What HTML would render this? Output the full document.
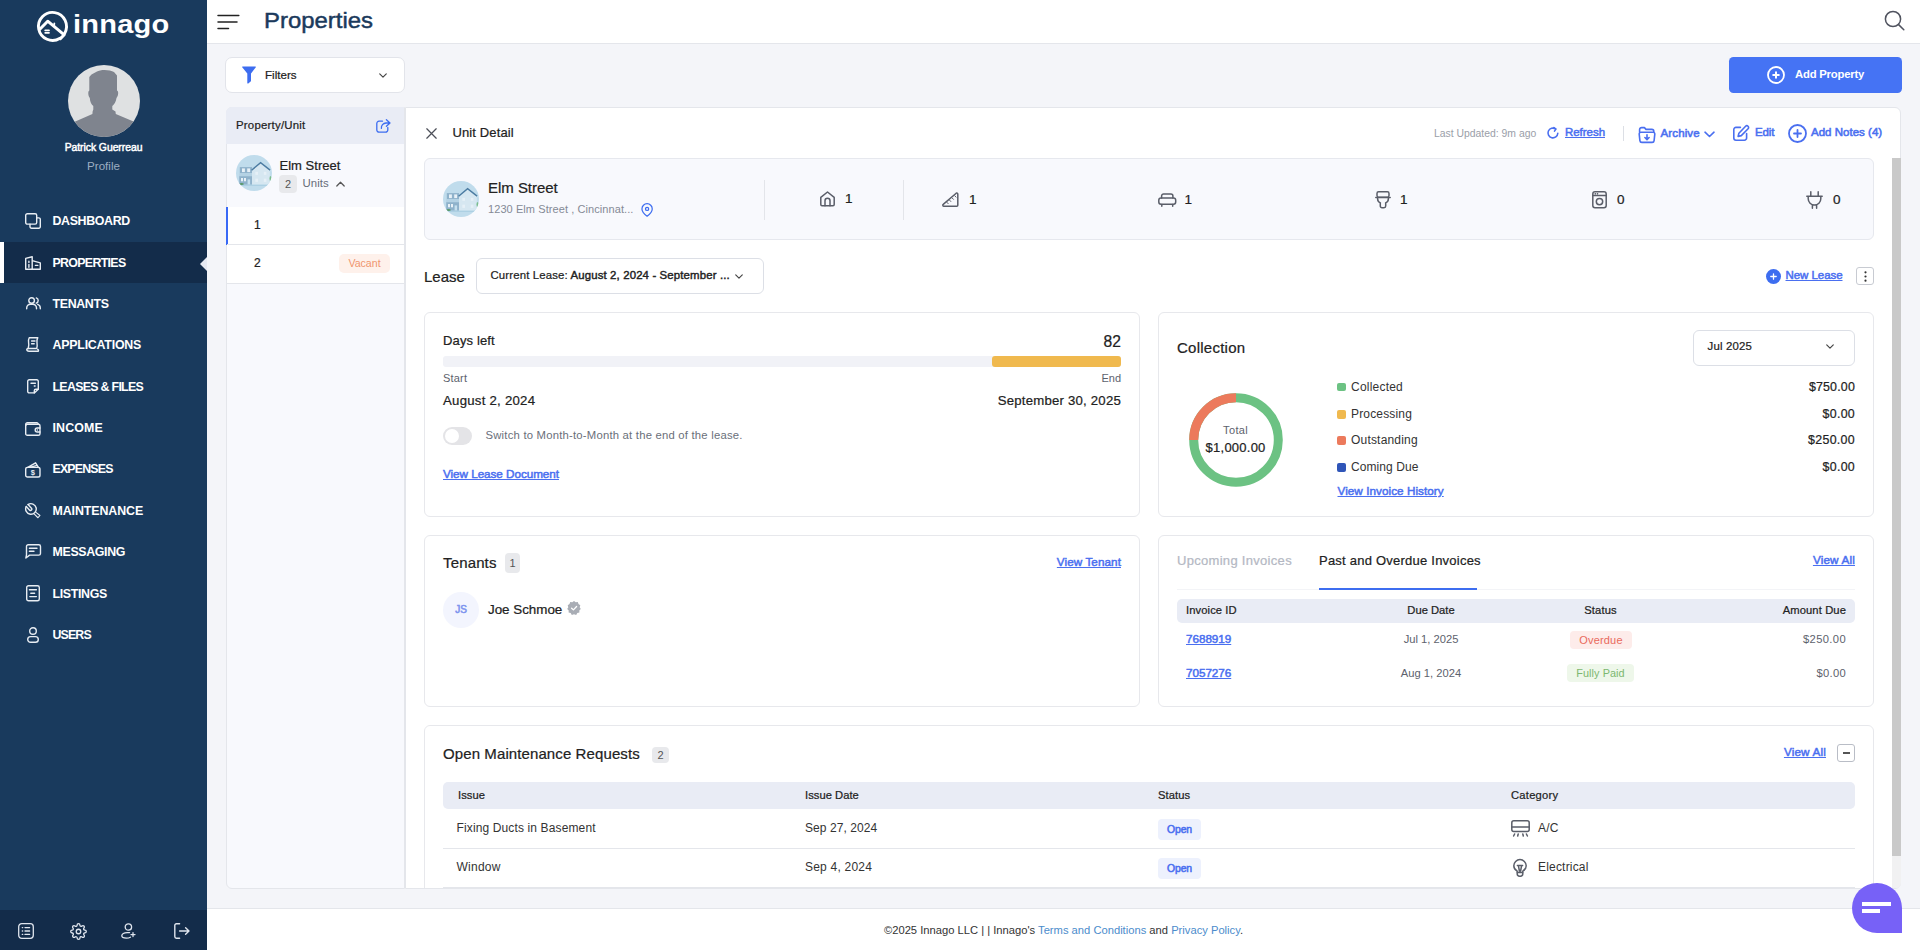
<!DOCTYPE html>
<html lang="en">
<head>
<meta charset="utf-8">
<title>Properties</title>
<style>
*{box-sizing:border-box;margin:0;padding:0}
html,body{width:1920px;height:950px;overflow:hidden;background:#f4f5f9;font-family:"Liberation Sans",sans-serif;color:#222}
.abs{position:absolute}
.t{position:absolute;white-space:nowrap;line-height:20px;height:20px}
.b{font-weight:bold}
.m{-webkit-text-stroke:0.22px}
.sb{-webkit-text-stroke:0.55px}
.lnk{color:#4a6ff0;text-decoration:underline;-webkit-text-stroke:0.5px;text-underline-offset:1px}
svg{position:absolute;overflow:visible}
/* sidebar */
#sb{position:absolute;left:0;top:0;width:207px;height:950px;background:#193a5d}
#sbb{position:absolute;left:0;top:910px;width:207px;height:40px;background:#132c4a}
.nav{position:absolute;left:0;width:207px;height:41px}
.nav span{position:absolute;left:52.5px;top:10.7px;line-height:20px;font-size:12.4px;font-weight:bold;color:#fff;letter-spacing:-0.35px;white-space:nowrap}
.nav.act{background:#132c4a}
.nav.act:before{content:"";position:absolute;left:0;top:0;width:4px;height:41px;background:#fff}
.nav.act:after{content:"";position:absolute;right:0;top:14.5px;border-style:solid;border-width:7.5px 7px 7.5px 0;border-color:transparent #e6e9f2 transparent transparent}
.nav svg{left:24px;top:11px;width:19px;height:19px;fill:none;stroke:#e8edf3;stroke-width:1.4;stroke-linecap:round;stroke-linejoin:round}
/* header */
#hd{position:absolute;left:207px;top:0;width:1713px;height:44px;background:#fff;border-bottom:1px solid #e4e6eb}
#ft{position:absolute;left:207px;top:908px;width:1713px;height:42px;background:#fff;border-top:1px solid #e4e6eb}
.card{position:absolute;background:#fff;border:1px solid #e7e8ec;border-radius:6px}
.th{position:absolute;background:#e9ecf5;border-radius:5px}
.si{fill:none;stroke:#5a5e69;stroke-width:1.5;stroke-linecap:round;stroke-linejoin:round}
.badge{position:absolute;border-radius:4px;text-align:center;white-space:nowrap}
</style>
</head>
<body>
<!-- SIDEBAR -->
<div id="sb">
  <svg id="lg" style="left:35px;top:9px;width:34px;height:34px" viewBox="0 0 34 34" fill="none" stroke="#fff" stroke-linecap="round" stroke-linejoin="round">
    <path d="M29.6 24.4 A14 14 0 1 0 25 29.2" stroke-width="2.9"/>
    <path d="M5.3 19.8 L12.7 12.2 L29.2 25.8 L25.4 29.6" stroke-width="3"/>
    <path d="M19.3 14.2 v2.6" stroke-width="1.6"/>
    <path d="M10.2 21.3 h3.8 M10.2 23.8 h3.8" stroke-width="1.8"/>
  </svg>
  <div id="xL" class="t" style="left:73px;top:3.5px;height:40px;line-height:40px;font-size:26.4px;font-weight:bold;color:#fff;letter-spacing:0.2px;transform:scaleX(1.1);transform-origin:0 50%">innago</div>
  <div class="abs" style="left:68px;top:65px;width:72px;height:72px;border-radius:50%;background:#dfe1e2;overflow:hidden">
    <svg style="left:0;top:0;width:72px;height:72px" viewBox="0 0 72 72"><path fill="#7f848e" d="M29 6.500C32 4.300 42 4.300 46 7L49 10.500V25.500C50.800 26 50.500 31 48.500 33 48 37 46 39.500 44.300 41V44.500L47.500 46.500 47.800 49 65.500 56.500 72 60V72H0V60L7.300 56.500 24.400 49 24.600 46.500 25.300 44.500V41C23.500 39.500 22 37 21.800 33 20 31 19.800 26 21.300 25.500V12L23.500 9.500z"/></svg>
  </div>
  <div id="x2" class="t" style="left:0;width:207px;text-align:center;top:138.2px;font-size:10.4px;-webkit-text-stroke:0.45px;color:#fff;letter-spacing:-0.05px">Patrick Guerreau</div>
  <div id="x3" class="t" style="left:0;width:207px;text-align:center;top:156.4px;font-size:11.6px;color:#9dadc1">Profile</div>

  <div class="nav" style="top:200px"><svg style="left:25px;top:13px;width:16px;height:16px" viewBox="0 0 16 16"><rect x=".7" y=".7" width="11" height="10.4" rx="1.6"/><path d="M5 11.1v2.7a1.5 1.5 0 0 0 1.5 1.5h7.3a1.5 1.5 0 0 0 1.5-1.5V6.4a1.5 1.5 0 0 0-1.5-1.5h-2.1"/></svg><span>DASHBOARD</span></div>
  <div class="nav act" style="top:242px"><svg style="left:24.6px;top:14px;width:16px;height:14px" viewBox="0 0 16 14"><path d="M.7 13.3V2.4L7.2.7v12.6M7.2 4.6l8.1 2.3v6.4H.7"/><path d="M3.9 5.2v1.2M3.9 8.4v2.8M10.4 9.4h2.4"/></svg><span style="letter-spacing:-0.69px">PROPERTIES</span></div>
  <div class="nav" style="top:283px"><svg style="left:26px;top:14.3px;width:15px;height:12.5px" viewBox="0 0 15 12.5"><circle cx="5.6" cy="3.5" r="2.8"/><path d="M.7 11.8v-.8a3.8 3.8 0 0 1 3.8-3.8h2.2a3.8 3.8 0 0 1 3.8 3.8v.8"/><path d="M10.3.9a2.8 2.8 0 0 1 0 5.3M14.3 11.8v-.8a3.8 3.8 0 0 0-2.6-3.6"/></svg><span>TENANTS</span></div>
  <div class="nav" style="top:324px"><svg style="left:26px;top:13.2px;width:13.5px;height:15px" viewBox="0 0 13.5 15"><path d="M3.2.7h8.6q-1.3 2.4-.8 5.2t-.3 5.6H2.2q1-3.2.4-5.8T3.2.7z"/><path d="M2.2 11.5q-1.7.3-1.4 1.5t2.2 1.3h9.2q.8-1.2-.5-2"/><path d="M5.6 4h3.4M5.6 6.8h2.6"/></svg><span style="letter-spacing:-0.23px">APPLICATIONS</span></div>
  <div class="nav" style="top:366px"><svg style="left:27px;top:13.4px;width:12px;height:14.6px" viewBox="0 0 12 14.6"><path d="M.7 2.2A1.5 1.5 0 0 1 2.2.7h7.6a1.5 1.5 0 0 1 1.5 1.5v8l-4 3.7H2.2a1.5 1.5 0 0 1-1.5-1.5z"/><path d="M11.3 10.2H8.8a1.5 1.5 0 0 0-1.5 1.5v2.2M4 4.3h4.4M7.3 7h.8"/></svg><span style="letter-spacing:-0.71px">LEASES &amp; FILES</span></div>
  <div class="nav" style="top:407px"><svg style="left:25.3px;top:14.5px;width:15.7px;height:14px" viewBox="0 0 15.7 14"><rect x=".7" y="2.2" width="14.3" height="11.1" rx="1.6"/><path d="M.7 3.6V2.4A1.7 1.7 0 0 1 2.4.7h9.4a1.5 1.5 0 0 1 1.5 1.5"/><path d="M15 6h-2.8a2 2 0 0 0 0 4H15"/><path d="M12.2 8h.2"/></svg><span style="letter-spacing:0.13px">INCOME</span></div>
  <div class="nav" style="top:448px"><svg style="left:25.3px;top:13.5px;width:15.7px;height:15.7px" viewBox="0 0 15.7 15.7"><rect x=".7" y="5.4" width="14.3" height="9.6" rx="1.8"/><path d="M2.8 5.4L10.6.8l2.8 4.6M5.6 5.2l5.6-1.6"/><text x="7.85" y="13" font-family="Liberation Sans,sans-serif" font-size="7.5" font-weight="bold" text-anchor="middle" fill="#e8edf3" stroke="none">$</text></svg><span style="letter-spacing:-0.83px">EXPENSES</span></div>
  <div class="nav" style="top:490px"><svg style="left:24px;top:12px;width:18px;height:18px" viewBox="0 0 18 18"><path d="M4.07 2.52 A5.3 5.3 0 1 1 2.24 4.55"/><path d="M4.07 2.52 L7.46 6.16 A1.35 1.35 0 0 1 5.66 8.16 L2.24 4.55"/><path d="M11.96 10.36 L15.96 13.46 L13.96 15.76 L10.36 12.16" stroke-width="1.1"/></svg><span style="letter-spacing:-0.09px">MAINTENANCE</span></div>
  <div class="nav" style="top:531px"><svg style="left:24.8px;top:13.3px;width:16.2px;height:14.8px" viewBox="0 0 16.2 14.8"><path d="M.9 14l.6-3.2V2.4A1.7 1.7 0 0 1 3.2.7h10.6a1.7 1.7 0 0 1 1.7 1.7v7a1.7 1.7 0 0 1-1.7 1.7H4.6z"/><path d="M4.4 4.2h7.6M4.4 7.2h4.6"/></svg><span>MESSAGING</span></div>
  <div class="nav" style="top:573px"><svg style="left:26px;top:12.3px;width:14px;height:16.4px" viewBox="0 0 14 16.4"><rect x=".7" y=".7" width="12.6" height="15" rx="1.8"/><path d="M3.4 4.8h7M4.800 8.200h3.800M3.800 11.600h6.600"/></svg><span>LISTINGS</span></div>
  <div class="nav" style="top:614px"><svg style="left:27px;top:13.4px;width:12px;height:16px" viewBox="0 0 12 16"><circle cx="6" cy="4" r="3.3"/><rect x=".7" y="9.6" width="10.6" height="5.7" rx="2.85"/></svg><span style="letter-spacing:-0.87px">USERS</span></div>

  <div id="sbb">
    <svg style="left:18px;top:13px;width:16px;height:16px" viewBox="0 0 16 16" fill="none" stroke="#dfe5ee" stroke-width="1.3" stroke-linecap="round"><rect x=".7" y=".7" width="14.6" height="14.6" rx="3"/><path d="M7 4.6h4.6M7 8h4.6M7 11.4h4.6M4.3 4.6h.4M4.3 8h.4M4.3 11.4h.4"/></svg>
    <svg style="left:69.5px;top:12.5px;width:17px;height:17px" viewBox="0 0 24 24" fill="none" stroke="#dfe5ee" stroke-width="1.85" stroke-linecap="round" stroke-linejoin="round"><circle cx="12" cy="12" r="3.2"/><path d="M19.4 15a1.65 1.65 0 0 0 .33 1.82l.06.06a2 2 0 0 1 0 2.83 2 2 0 0 1-2.83 0l-.06-.06a1.65 1.65 0 0 0-1.82-.33 1.65 1.65 0 0 0-1 1.51V21a2 2 0 0 1-2 2 2 2 0 0 1-2-2v-.09A1.65 1.65 0 0 0 9 19.4a1.65 1.65 0 0 0-1.82.33l-.06.06a2 2 0 0 1-2.83 0 2 2 0 0 1 0-2.830l.06-.06a1.65 1.65 0 0 0 .33-1.82 1.65 1.65 0 0 0-1.51-1H3a2 2 0 0 1-2-2 2 2 0 0 1 2-2h.09A1.65 1.65 0 0 0 4.600 9a1.65 1.65 0 0 0-.33-1.82l-.06-.06a2 2 0 0 1 0-2.83 2 2 0 0 1 2.83 0l.06.06a1.65 1.65 0 0 0 1.82.33H9a1.65 1.65 0 0 0 1-1.51V3a2 2 0 0 1 2-2 2 2 0 0 1 2 2v.09a1.65 1.65 0 0 0 1 1.51 1.65 1.65 0 0 0 1.82-.33l.06-.06a2 2 0 0 1 2.83 0 2 2 0 0 1 0 2.83l-.06.06a1.65 1.65 0 0 0-.33 1.82V9a1.65 1.65 0 0 0 1.51 1H21a2 2 0 0 1 2 2 2 2 0 0 1-2 2h-.09a1.65 1.65 0 0 0-1.51 1z"/></svg>
    <svg style="left:121px;top:13px;width:15px;height:16px" viewBox="0 0 15 16" fill="none" stroke="#dfe5ee" stroke-width="1.3" stroke-linecap="round"><circle cx="7.4" cy="4" r="3.2"/><path d="M8.6 9.6H6.2C3 9.6.8 11 .8 12.8c0 1.4 1.8 2.3 4.6 2.4 1.6 0 3-.4 4-1M12 9.6v4M10 11.6h4"/></svg>
    <svg style="left:174px;top:13px;width:16px;height:16px" viewBox="0 0 16 16" fill="none" stroke="#dfe5ee" stroke-width="1.4" stroke-linecap="round" stroke-linejoin="round"><path d="M5.6.8H2.4A1.6 1.6 0 0 0 .8 2.4v11.2a1.6 1.6 0 0 0 1.6 1.6h3.2M5.6 8h9.4M11.6 4.8L15 8l-3.4 3.2"/></svg>
  </div>
</div>
<!-- HEADER -->
<div id="hd">
  <svg style="left:10px;top:14px;width:23px;height:16px" viewBox="0 0 23 16" fill="none" stroke="#222" stroke-width="1.5" stroke-linecap="round"><path d="M1 1.5h20.8M1 8h19M1 14.5h10.5"/></svg>
  <div id="xP" class="t" style="left:56.5px;top:0.6px;height:40px;line-height:40px;font-size:22.2px;color:#1b3a5c;-webkit-text-stroke:0.45px;transform:scaleX(1.078);transform-origin:0 50%">Properties</div>
  <svg style="left:1676.8px;top:10px;width:21px;height:21px" viewBox="0 0 21 21" fill="none" stroke="#50535f" stroke-width="1.5" stroke-linecap="round"><circle cx="9" cy="9" r="7.6"/><path d="M14.6 14.6l5.2 5.2"/></svg>
</div>
<!-- MAIN -->
<div id="main" class="abs" style="left:0;top:0;width:1920px;height:950px;pointer-events:none">
  <!-- filters -->
  <div class="abs" style="left:225px;top:57px;width:180px;height:36px;background:#fff;border:1px solid #e2e4ea;border-radius:7px"></div>
  <svg style="left:242px;top:66px;width:14px;height:18px" viewBox="0 0 14 18"><path fill="#3d6df0" d="M.6.4h12.8c.5 0 .7.5.4.9L9 7.6v7.2c0 .3-.1.5-.4.7l-2.300 1.900c-.5.300-1 .1-1-.5V7.600L.2 1.300C-.1.900.100.400.600.400z"/></svg>
  <div id="x5" class="t m" style="left:265px;top:65px;font-size:11.6px;color:#222">Filters</div>
  <svg style="left:378.5px;top:72.6px;width:8px;height:5.4px" viewBox="0 0 9 6" fill="none" stroke="#444" stroke-width="1.3" stroke-linecap="round" stroke-linejoin="round"><path d="M.8.9l3.700 3.800L8.200.9"/></svg>
  <!-- add property -->
  <div class="abs" style="left:1729px;top:57px;width:173px;height:36px;background:#4573f4;border-radius:4.5px"></div>
  <svg style="left:1767px;top:66px;width:18px;height:18px" viewBox="0 0 18 18" fill="none" stroke="#fff" stroke-width="1.8" stroke-linecap="round"><circle cx="9" cy="9" r="8"/><path d="M9 6.200v5.600M6.200 9h5.600" stroke-width="2"/></svg>
  <div id="x6" class="t b" style="left:1795px;top:64.2px;font-size:11.3px;color:#fff;letter-spacing:-0.21px">Add Property</div>

  <!-- left list panel -->
  <div class="abs" style="left:226px;top:107px;width:179px;height:782px;background:#f8f9fd;border:1px solid #e4e6eb;border-radius:6px 0 0 6px"></div>
  <div class="abs" style="left:226px;top:107px;width:178px;height:37px;background:#e9ecf5;border-radius:6px 0 0 0"></div>
  <div id="x7" class="t m" style="left:236px;top:115px;font-size:11.4px;color:#222;letter-spacing:0.23px">Property/Unit</div>
  <svg style="left:375.500px;top:119px;width:15px;height:14px" viewBox="0 0 15 14" fill="none" stroke="#3d6df0" stroke-width="1.3" stroke-linecap="round" stroke-linejoin="round"><path d="M6.500 2.200H3a2.200 2.200 0 0 0-2.200 2.200v6.600A2.200 2.200 0 0 0 3 13.200h6.600a2.200 2.200 0 0 0 2.200-2.200V8.400"/><path d="M10.400.8l3.600 3.200-3.600 3.200M14 4H10A4.800 4.800 0 0 0 5.400 9.400"/></svg>
  <!-- property row -->
  <div class="abs" style="left:227px;top:206.500px;width:177px;height:1px;background:#e4e6eb"></div>
  <svg style="left:236px;top:155px;width:36px;height:36px;border-radius:50%;overflow:hidden" viewBox="0 0 36 36"><g><rect width="36" height="36" fill="#c0dcec"/><rect x="0" y="29.500" width="36" height="1.200" fill="#a6cbe0"/><rect x="3.800" y="12.100" width="12.200" height="6.100" fill="#8fb2cb"/><rect x="3.200" y="18.200" width="12.800" height="3" fill="#b4d2e4"/><rect x="3.200" y="21.200" width="12.800" height="8.300" fill="#8fb2cb"/><rect x="6" y="13.400" width="2.900" height="3.700" fill="#e8f1f7"/><rect x="11.200" y="13.400" width="2.900" height="3.700" fill="#e8f1f7"/><rect x="5" y="23" width="2" height="3.300" fill="#e8f1f7"/><rect x="8" y="23" width="2" height="3.300" fill="#e8f1f7"/><rect x="11.600" y="24.400" width="2.500" height="5.100" fill="#c6e0ee"/><path d="M16 15L24.600 7.600l9.200 7.400V29.500H16z" fill="#d6e7f1"/><path d="M15.600 15.200L24.600 7.600l9.500 7.500" fill="none" stroke="#4c7ca2" stroke-width="1.4"/><rect x="19.400" y="16.800" width="2.600" height="3" fill="#e6f0f7"/><rect x="27.800" y="16.800" width="2.600" height="3" fill="#e6f0f7"/><rect x="19.400" y="23.700" width="2.600" height="3.200" fill="#e6f0f7"/><rect x="27.800" y="23.700" width="2.600" height="3.200" fill="#e6f0f7"/><ellipse cx="5.600" cy="29" rx="2.200" ry="1" fill="#5a9a6c"/><ellipse cx="34.500" cy="23.500" rx="1" ry="2.600" fill="#7bbd8c"/></g></svg>
  <div id="x8" class="t m" style="left:279.500px;top:155.500px;font-size:13px;color:#222;letter-spacing:0.03px">Elm Street</div>
  <div id="x9" class="badge" style="left:279px;top:175px;width:18px;height:18px;line-height:18px;background:#e8e9ec;font-size:11px;color:#555">2</div>
  <div id="x10" class="t" style="left:302.500px;top:173px;font-size:11.400px;color:#666c78;letter-spacing:0.05px">Units</div>
  <svg style="left:335.500px;top:181px;width:9px;height:6px" viewBox="0 0 9 6" fill="none" stroke="#555" stroke-width="1.25" stroke-linecap="round" stroke-linejoin="round"><path d="M.8 5L4.500 1.200 8.200 5"/></svg>
  <!-- unit rows -->
  <div class="abs" style="left:226px;top:207px;width:178px;height:37px;background:#fff"></div>
  <div class="abs" style="left:226px;top:207px;width:2px;height:38px;background:#3869f6"></div>
  <div class="abs" style="left:227px;top:244px;width:177px;height:1px;background:#e4e6eb"></div>
  <div id="x11" class="t m" style="left:254px;top:215px;font-size:12px;color:#222">1</div>
  <div class="abs" style="left:227px;top:245px;width:177px;height:38px;background:#fff"></div>
  <div class="abs" style="left:227px;top:283px;width:177px;height:1px;background:#e4e6eb"></div>
  <div id="x12" class="t m" style="left:254px;top:252.500px;font-size:12px;color:#222">2</div>
  <div id="x13" class="badge" style="left:339px;top:254px;width:51px;height:19px;line-height:19px;background:#fef1eb;font-size:10.6px;color:#f0956e;border-radius:5px">Vacant</div>

  <!-- detail panel -->
  <div class="abs" style="left:405px;top:107px;width:1496px;height:782px;background:#fff;border:1px solid #e4e6eb;border-left-color:#e4e6eb;border-radius:0 6px 6px 0"></div>
  <!-- scrollbar -->
  <div class="abs" style="left:1892px;top:158px;width:9px;height:730px;background:#f1f1f2;border-radius:0 0 5px 0"></div>
  <div class="abs" style="left:1892px;top:158px;width:9px;height:698px;background:#c9c9c9"></div>
  <!-- unit detail header -->
  <svg style="left:426px;top:128px;width:11px;height:11px" viewBox="0 0 11 11" fill="none" stroke="#4d5059" stroke-width="1.25" stroke-linecap="round"><path d="M.8.8l9.400 9.400M10.200.8L.8 10.200"/></svg>
  <div id="x14" class="t m" style="left:452.500px;top:122.500px;font-size:13px;color:#222;letter-spacing:0.12px">Unit Detail</div>
  <div id="x15" class="t" style="left:1434px;top:123.500px;font-size:10.400px;color:#9a9ea8">Last Updated: 9m ago</div>
  <svg style="left:1547px;top:127px;width:12px;height:12px" viewBox="0 0 12 12" fill="none" stroke="#4a6ff0" stroke-width="1.6" stroke-linecap="round" stroke-linejoin="round"><path d="M10.800 6.300A4.900 4.900 0 1 1 8.600 1.900"/><path d="M6.900.6l2 1.500-1.400 2"/></svg>
  <div id="x16" class="t lnk" style="left:1565px;top:122px;font-size:11.5px;letter-spacing:-0.04px">Refresh</div>
  <div class="abs" style="left:1623px;top:126px;width:1px;height:15px;background:#dcdfe5"></div>
  <svg style="left:1638px;top:125.500px;width:18px;height:18px" viewBox="0 0 18 18" fill="none" stroke="#4a6ff0" stroke-width="1.6" stroke-linecap="round" stroke-linejoin="round"><path d="M1.600 6.200V3.600A2 2 0 0 1 3.600 1.600h2.800l1.600 1.800h5.800a2 2 0 0 1 2 2v.8"/><path d="M3 6.200h12a1.800 1.800 0 0 1 1.800 2l-.7 6.400a2 2 0 0 1-2 1.800H3.900a2 2 0 0 1-2-1.800L1.200 8.200a1.800 1.800 0 0 1 1.800-2z"/><path d="M9 8.800v4.600M6.900 11.500L9 13.600l2.100-2.100"/></svg>
  <div id="x17" class="t sb" style="left:1660.500px;top:123px;font-size:11.5px;color:#4a6ff0;letter-spacing:0.13px">Archive</div>
  <svg style="left:1704px;top:131px;width:11px;height:7px" viewBox="0 0 11 7" fill="none" stroke="#4a6ff0" stroke-width="1.600" stroke-linecap="round" stroke-linejoin="round"><path d="M1 1.200l4.500 4.300L10 1.200"/></svg>
  <svg style="left:1732.500px;top:125px;width:17px;height:16px" viewBox="0 0 17 16" fill="none" stroke="#4a6ff0" stroke-width="1.6" stroke-linecap="round" stroke-linejoin="round"><path d="M7.400 2.400H3A2.200 2.200 0 0 0 .8 4.600V13A2.200 2.200 0 0 0 3 15.200h8.400a2.200 2.200 0 0 0 2.200-2.200V8.600"/><path d="M12.600 1.300a1.700 1.700 0 0 1 2.500 2.400L8.300 10.600l-3.200.8.800-3.200z"/></svg>
  <div id="x18" class="t sb" style="left:1755px;top:122px;font-size:11.5px;color:#4a6ff0;letter-spacing:-0.14px">Edit</div>
  <svg style="left:1787.500px;top:123.500px;width:19px;height:19px" viewBox="0 0 19 19" fill="none" stroke="#4a6ff0" stroke-width="1.6" stroke-linecap="round"><circle cx="9.500" cy="9.500" r="8.500" stroke-width="1.8"/><path d="M9.500 6v7M6 9.500h7" stroke-width="1.8"/></svg>
  <div id="x19" class="t sb" style="left:1811px;top:122px;font-size:11.5px;color:#4a6ff0;letter-spacing:0.02px">Add Notes (4)</div>

  <!-- info card -->
  <div class="abs" style="left:424px;top:158px;width:1450px;height:82px;background:#f8f9fd;border:1px solid #e6e8ee;border-radius:6px"></div>
  <svg style="left:443px;top:181px;width:36px;height:36px;border-radius:50%;overflow:hidden" viewBox="0 0 36 36"><g><rect width="36" height="36" fill="#c0dcec"/><rect x="0" y="29.500" width="36" height="1.200" fill="#a6cbe0"/><rect x="3.800" y="12.100" width="12.200" height="6.100" fill="#8fb2cb"/><rect x="3.200" y="18.200" width="12.800" height="3" fill="#b4d2e4"/><rect x="3.200" y="21.200" width="12.800" height="8.300" fill="#8fb2cb"/><rect x="6" y="13.400" width="2.900" height="3.700" fill="#e8f1f7"/><rect x="11.200" y="13.400" width="2.900" height="3.700" fill="#e8f1f7"/><rect x="5" y="23" width="2" height="3.300" fill="#e8f1f7"/><rect x="8" y="23" width="2" height="3.300" fill="#e8f1f7"/><rect x="11.600" y="24.400" width="2.500" height="5.100" fill="#c6e0ee"/><path d="M16 15L24.600 7.600l9.200 7.400V29.500H16z" fill="#d6e7f1"/><path d="M15.600 15.200L24.600 7.600l9.500 7.500" fill="none" stroke="#4c7ca2" stroke-width="1.4"/><rect x="19.400" y="16.800" width="2.600" height="3" fill="#e6f0f7"/><rect x="27.800" y="16.800" width="2.600" height="3" fill="#e6f0f7"/><rect x="19.400" y="23.700" width="2.600" height="3.200" fill="#e6f0f7"/><rect x="27.800" y="23.700" width="2.600" height="3.200" fill="#e6f0f7"/><ellipse cx="5.600" cy="29" rx="2.200" ry="1" fill="#5a9a6c"/><ellipse cx="34.500" cy="23.500" rx="1" ry="2.600" fill="#7bbd8c"/></g></svg>
  <div id="x20" class="t m" style="left:488px;top:178px;font-size:15px;color:#222;letter-spacing:-0.03px">Elm Street</div>
  <div id="x21" class="t" style="left:488px;top:199px;font-size:11px;color:#858a96;letter-spacing:0.08px">1230 Elm Street , Cincinnat...</div>
  <svg style="left:641.2px;top:203px;width:12.2px;height:14.2px" viewBox="0 0 13 15" fill="none" stroke="#3d6df0" stroke-width="1.300" stroke-linejoin="round"><path d="M6.500 14S1 9.800 1 6.200a5.500 5.500 0 0 1 11 0C12 9.800 6.500 14 6.500 14z"/><circle cx="6.500" cy="6.200" r="1.700"/></svg>
  <div class="abs" style="left:764px;top:179.500px;width:1px;height:40px;background:#e3e5ea"></div>
  <div class="abs" style="left:903px;top:179.500px;width:1px;height:40px;background:#e3e5ea"></div>
  <!-- stat icons -->
  <svg class="si" style="left:819.500px;top:191px;width:15px;height:16px" viewBox="0 0 15 16"><path d="M.8 6.400L7.500 1l6.700 5.400v7.200a1.200 1.200 0 0 1-1.200 1.200H2a1.200 1.200 0 0 1-1.200-1.200z"/><path d="M5 14.800v-5a2.500 2.500 0 0 1 5 0v5"/></svg>
  <div id="x22" class="t m" style="left:845px;top:189px;font-size:13.500px;color:#222">1</div>
  <svg class="si" style="left:942px;top:192px;width:16.500px;height:15px" viewBox="0 0 16.500 15"><path d="M14.200 1.200a1 1 0 0 1 1.600.8v11.200a1 1 0 0 1-1 1H1.800a1 1 0 0 1-.6-1.800z"/><path d="M5 10.400l1.200 1.300M7.600 8.200l1.200 1.300M10.200 6l1.200 1.300M12.800 3.800l1.200 1.300" stroke-width="1"/></svg>
  <div id="x23" class="t m" style="left:969px;top:189.500px;font-size:13.500px;color:#222">1</div>
  <svg class="si" style="left:1157.500px;top:192.500px;width:18.500px;height:14px" viewBox="0 0 18.500 14"><path d="M3.600 5V3a2 2 0 0 1 2-2h7.300a2 2 0 0 1 2 2v2"/><rect x=".8" y="5" width="16.900" height="6.200" rx="2.200"/><path d="M3.800 11.400v1.800M14.700 11.400v1.800"/></svg>
  <div id="x24" class="t m" style="left:1184.500px;top:189.500px;font-size:13.500px;color:#222">1</div>
  <svg class="si" style="left:1375px;top:191px;width:16px;height:17.500px" viewBox="0 0 16 17.500"><rect x="2" y=".8" width="12" height="5.400" rx="1.600"/><path d="M.8 6.400h14.400M2.600 6.600v1.200c0 2.400 1.400 3.600 2.800 4.100M13.400 6.600v1.200c0 2.400-1.400 3.600-2.800 4.100M5.300 11.800v3.200a1.700 1.700 0 0 0 1.700 1.700h2a1.700 1.700 0 0 0 1.700-1.700v-3.200"/></svg>
  <div id="x25" class="t m" style="left:1400px;top:189.500px;font-size:13.500px;color:#222">1</div>
  <svg class="si" style="left:1591.500px;top:191px;width:15px;height:17.500px" viewBox="0 0 15 17.500"><rect x=".8" y=".8" width="13.400" height="15.900" rx="2.200"/><path d="M.8 4.600h13.400M3.200 2.700h.2M5.400 2.700h.2"/><circle cx="7.500" cy="10.600" r="3.200"/></svg>
  <div id="x26" class="t m" style="left:1617px;top:189.500px;font-size:13.500px;color:#222">0</div>
  <svg class="si" style="left:1805.500px;top:191px;width:17px;height:18px" viewBox="0 0 17 18"><path d="M4.800.8v4M12.200.8v4M.8 5.200h15.400M2.200 5.400v2.400a6.300 6.300 0 0 0 12.600 0V5.400M6.400 14v3.200M10.600 14v3.200"/></svg>
  <div id="x27" class="t m" style="left:1833px;top:189.500px;font-size:13.500px;color:#222">0</div>

  <!-- lease row -->
  <div id="x28" class="t m" style="left:424px;top:266.500px;font-size:15px;color:#222;letter-spacing:-0.02px">Lease</div>
  <div class="abs" style="left:476px;top:258px;width:288px;height:36px;background:#fff;border:1px solid #dcdfe6;border-radius:6px"></div>
  <div id="x29" class="t m" style="left:490.500px;top:264.700px;font-size:11.400px;color:#222;letter-spacing:0.14px">Current Lease: <span style="-webkit-text-stroke:0.42px">August 2, 2024 - September ...</span></div>
  <svg style="left:735.3px;top:273.6px;width:8px;height:5.4px" viewBox="0 0 9 6" fill="none" stroke="#444" stroke-width="1.3" stroke-linecap="round" stroke-linejoin="round"><path d="M.8.9l3.700 3.800L8.200.9"/></svg>
  <svg style="left:1765.500px;top:269px;width:15px;height:15px" viewBox="0 0 15 15"><circle cx="7.500" cy="7.500" r="7.500" fill="#3d6df0"/><path d="M7.500 4.800v5.400M4.800 7.500h5.400" stroke="#fff" stroke-width="1.300" stroke-linecap="round"/></svg>
  <div id="x30" class="t lnk" style="left:1785.500px;top:265px;font-size:11.5px;letter-spacing:-0.06px">New Lease</div>
  <div class="abs" style="left:1856px;top:267px;width:18px;height:18px;border:1px solid #c8cbd2;border-radius:3px;background:#fff"></div>
  <svg style="left:1863.500px;top:270.500px;width:3px;height:11px" viewBox="0 0 3 11"><circle cx="1.500" cy="1.300" r="1.100" fill="#333"/><circle cx="1.500" cy="5.500" r="1.100" fill="#333"/><circle cx="1.500" cy="9.700" r="1.100" fill="#333"/></svg>
  <!-- card: days left -->
  <div class="card" style="left:424px;top:312px;width:716px;height:205px"></div>
  <div id="x31" class="t m" style="left:443px;top:331px;font-size:13px;color:#222;letter-spacing:0.13px">Days left</div>
  <div id="x32" class="t m" style="left:1061px;width:60px;text-align:right;top:331.500px;font-size:15.6px;color:#222;letter-spacing:0.07px">82</div>
  <div class="abs" style="left:443px;top:356px;width:678px;height:11px;background:#f1f2f7;border-radius:3px"></div>
  <div class="abs" style="left:992px;top:356px;width:129px;height:11px;background:#f0b94e;border-radius:3px"></div>
  <div id="x33" class="t" style="left:443px;top:368px;font-size:11px;color:#5d626d;letter-spacing:0.20px">Start</div>
  <div id="x34" class="t" style="left:1061px;width:60px;text-align:right;top:368px;font-size:11px;color:#5d626d;letter-spacing:-0.06px">End</div>
  <div id="x35" class="t m" style="left:443px;top:390.500px;font-size:13.200px;color:#222;letter-spacing:0.25px">August 2, 2024</div>
  <div id="x36" class="t m" style="left:921px;width:200px;text-align:right;top:390.500px;font-size:13.200px;color:#222;letter-spacing:0.21px">September 30, 2025</div>
  <div class="abs" style="left:443px;top:427px;width:29px;height:18px;border-radius:9px;background:#e4e4e7"></div>
  <div class="abs" style="left:445px;top:429px;width:14px;height:14px;border-radius:7px;background:#fff"></div>
  <div id="x37" class="t" style="left:485.500px;top:425px;font-size:11.300px;color:#6a6f7a;letter-spacing:0.21px">Switch to Month-to-Month at the end of the lease.</div>
  <div id="x38" class="t lnk" style="left:443px;top:464px;font-size:11.7px;letter-spacing:-0.04px">View Lease Document</div>

  <!-- card: collection -->
  <div class="card" style="left:1158px;top:312px;width:716px;height:205px"></div>
  <div id="x39" class="t m" style="left:1177px;top:338px;font-size:15px;color:#222;letter-spacing:0.25px">Collection</div>
  <div class="abs" style="left:1693px;top:330px;width:162px;height:36px;background:#fff;border:1px solid #dcdfe6;border-radius:6px"></div>
  <div id="x40" class="t m" style="left:1707.500px;top:336px;font-size:11.400px;color:#222;letter-spacing:0.18px">Jul 2025</div>
  <svg style="left:1826px;top:344px;width:8px;height:5.4px" viewBox="0 0 9 6" fill="none" stroke="#444" stroke-width="1.3" stroke-linecap="round" stroke-linejoin="round"><path d="M.8.9l3.700 3.800L8.200.9"/></svg>
  <svg style="left:1188.5px;top:393px;width:94px;height:94px" viewBox="0 0 94 94" fill="none" stroke-width="9"><circle cx="47" cy="47" r="42.300" stroke="#6cc283"/><path d="M4.700 47A42.300 42.300 0 0 1 47 4.700" stroke="#ec7a5c"/></svg>
  <div id="x41" class="t" style="left:1185.6px;width:100px;text-align:center;top:420px;font-size:11px;color:#5d626d;letter-spacing:0.35px">Total</div>
  <div id="x42" class="t m" style="left:1185.6px;width:100px;text-align:center;top:437.500px;font-size:13px;color:#222;letter-spacing:0.24px">$1,000.00</div>
  <div class="abs" style="left:1337.2px;top:382.500px;width:8.6px;height:8.6px;border-radius:2px;background:#6cc283"></div>
  <div class="abs" style="left:1337.2px;top:410px;width:8.6px;height:8.6px;border-radius:2px;background:#f0b94e"></div>
  <div class="abs" style="left:1337.2px;top:436px;width:8.6px;height:8.6px;border-radius:2px;background:#ec7a5c"></div>
  <div class="abs" style="left:1337.2px;top:463px;width:8.6px;height:8.6px;border-radius:2px;background:#2f55b8"></div>
  <div id="x43" class="t" style="left:1351px;top:376.500px;font-size:12px;color:#333;letter-spacing:0.22px">Collected</div>
  <div id="x44" class="t" style="left:1351px;top:403.500px;font-size:12px;color:#333;letter-spacing:0.16px">Processing</div>
  <div id="x45" class="t" style="left:1351px;top:429.500px;font-size:12px;color:#333;letter-spacing:0.19px">Outstanding</div>
  <div id="x46" class="t" style="left:1351px;top:456.500px;font-size:12px;color:#333;letter-spacing:0.08px">Coming Due</div>
  <div id="x47" class="t m" style="left:1755px;width:100px;text-align:right;top:376.500px;font-size:12.400px;color:#222;letter-spacing:0.19px">$750.00</div>
  <div id="x48" class="t m" style="left:1755px;width:100px;text-align:right;top:403.500px;font-size:12.400px;color:#222;letter-spacing:0.28px">$0.00</div>
  <div id="x49" class="t m" style="left:1755px;width:100px;text-align:right;top:429.500px;font-size:12.400px;color:#222;letter-spacing:0.31px">$250.00</div>
  <div id="x50" class="t m" style="left:1755px;width:100px;text-align:right;top:456.500px;font-size:12.400px;color:#222;letter-spacing:0.28px">$0.00</div>
  <div id="x51" class="t lnk" style="left:1337.500px;top:481px;font-size:11.7px;letter-spacing:0.06px">View Invoice History</div>

  <!-- card: tenants -->
  <div class="card" style="left:424px;top:535px;width:716px;height:172px"></div>
  <div id="x52" class="t m" style="left:443px;top:552.500px;font-size:15px;color:#222;letter-spacing:0.15px">Tenants</div>
  <div id="x53" class="badge" style="left:505px;top:553px;width:15px;height:20px;line-height:20px;background:#e8e9ec;font-size:11px;color:#555">1</div>
  <div id="x54" class="t lnk" style="left:921px;width:200px;text-align:right;top:552px;font-size:11.7px;letter-spacing:0.08px">View Tenant</div>
  <div class="abs" style="left:443px;top:592px;width:36px;height:36px;border-radius:18px;background:#f3f5fe"></div>
  <div id="x55" class="t sb" style="left:443px;width:36px;text-align:center;top:599.500px;font-size:10px;color:#7d94ee">JS</div>
  <div id="x56" class="t m" style="left:488px;top:599.500px;font-size:13.4px;color:#222;letter-spacing:-0.02px">Joe Schmoe</div>
  <svg style="left:567px;top:601px;width:14px;height:14px" viewBox="0 0 14 14"><path fill="#a9adb5" d="M7 0l1.700 1.300 2.100-.2.700 2 1.800 1.100-.6 2L13.800 8l-1.500 1.500.1 2.100-2.100.500L9.200 14 7 13.300 4.800 14l-1.100-1.900-2.100-.500.100-2.100L.2 8l1.100-1.800-.6-2 1.800-1.100.7-2 2.100.2z"/><path d="M4.600 7.200l1.800 1.700 3.200-3.400" fill="none" stroke="#fff" stroke-width="1.300" stroke-linecap="round" stroke-linejoin="round"/></svg>

  <!-- card: invoices -->
  <div class="card" style="left:1158px;top:535px;width:716px;height:172px"></div>
  <div id="x57" class="t m" style="left:1177px;top:550.500px;font-size:13px;color:#b4b8c3;letter-spacing:0.30px">Upcoming Invoices</div>
  <div id="x58" class="t m" style="left:1319px;top:550.500px;font-size:13px;color:#222;letter-spacing:0.23px">Past and Overdue Invoices</div>
  <div class="abs" style="left:1177px;top:588.500px;width:678px;height:1px;background:#f3f4f7"></div>
  <div class="abs" style="left:1319px;top:587.500px;width:158px;height:2.500px;background:#3d6df0"></div>
  <div id="x59" class="t lnk" style="left:1755px;width:100px;text-align:right;top:550px;font-size:11.7px;letter-spacing:0.17px">View All</div>
  <div class="th" style="left:1177px;top:599px;width:678px;height:24px"></div>
  <div id="x60" class="t m" style="left:1186px;top:600px;font-size:11.200px;color:#222;letter-spacing:0.10px">Invoice ID</div>
  <div id="x61" class="t m" style="left:1381px;width:100px;text-align:center;top:600px;font-size:11.200px;color:#222">Due Date</div>
  <div id="x62" class="t m" style="left:1550.500px;width:100px;text-align:center;top:600px;font-size:11.200px;color:#222;letter-spacing:0.11px">Status</div>
  <div id="x63" class="t m" style="left:1746px;width:100px;text-align:right;top:600px;font-size:11.200px;color:#222;letter-spacing:0.11px">Amount Due</div>
  <div id="x64" class="t lnk" style="left:1186px;top:629px;font-size:11.7px;letter-spacing:-0.04px">7688919</div>
  <div id="x65" class="t" style="left:1381px;width:100px;text-align:center;top:629px;font-size:11.200px;color:#5d626d">Jul 1, 2025</div>
  <div id="x66" class="badge" style="left:1570px;top:631px;width:62px;height:18px;line-height:18px;background:#fdecea;font-size:11px;color:#e96a5c;letter-spacing:0.17px">Overdue</div>
  <div id="x67" class="t" style="left:1746px;width:100px;text-align:right;top:629px;font-size:11.200px;color:#5d626d;letter-spacing:0.36px">$250.00</div>
  <div id="x68" class="t lnk" style="left:1186px;top:663px;font-size:11.7px;letter-spacing:-0.04px">7057276</div>
  <div id="x69" class="t" style="left:1381px;width:100px;text-align:center;top:663px;font-size:11.200px;color:#5d626d">Aug 1, 2024</div>
  <div id="x70" class="badge" style="left:1567px;top:664px;width:67px;height:18px;line-height:18px;background:#eef7ea;font-size:10.9px;color:#7db870;letter-spacing:0.06px">Fully Paid</div>
  <div id="x71" class="t" style="left:1746px;width:100px;text-align:right;top:663px;font-size:11.200px;color:#5d626d;letter-spacing:0.32px">$0.00</div>

  <!-- card: maintenance -->
  <div class="abs" style="left:424px;top:725px;width:1450px;height:163px;overflow:hidden"><div class="card" style="left:0;top:0;width:1450px;height:220px"></div></div>
  <div id="x72" class="t m" style="left:443px;top:743.500px;font-size:15px;color:#222;letter-spacing:0.10px">Open Maintenance Requests</div>
  <div id="x73" class="badge" style="left:652px;top:747px;width:17px;height:16px;line-height:16px;background:#e8e9ec;font-size:11px;color:#555">2</div>
  <div id="x74" class="t lnk" style="left:1726px;width:100px;text-align:right;top:742px;font-size:11.7px;letter-spacing:0.17px">View All</div>
  <div class="abs" style="left:1837px;top:744px;width:18px;height:18px;border:1px solid #b9bdc6;border-radius:3px;background:#fff"></div>
  <div class="abs" style="left:1842.5px;top:752.3px;width:7px;height:1.3px;background:#555"></div>
  <div class="th" style="left:443px;top:782px;width:1412px;height:26.500px"></div>
  <div id="x75" class="t m" style="left:458px;top:785px;font-size:11.200px;color:#222;letter-spacing:0.03px">Issue</div>
  <div id="x76" class="t m" style="left:805px;top:785px;font-size:11.200px;color:#222;letter-spacing:0.04px">Issue Date</div>
  <div id="x77" class="t m" style="left:1158px;top:785px;font-size:11.200px;color:#222;letter-spacing:0.06px">Status</div>
  <div id="x78" class="t m" style="left:1511px;top:785px;font-size:11.200px;color:#222;letter-spacing:0.24px">Category</div>
  <div id="x79" class="t" style="left:456.500px;top:817.500px;font-size:12px;color:#333;letter-spacing:0.13px">Fixing Ducts in Basement</div>
  <div id="x80" class="t" style="left:805px;top:817.500px;font-size:12px;color:#333;letter-spacing:0.07px">Sep 27, 2024</div>
  <div id="x81" class="badge sb" style="left:1158px;top:819px;width:43px;height:21px;line-height:22.6px;background:#edf1fd;font-size:10.4px;color:#4a6ff0;letter-spacing:-0.13px">Open</div>
  <svg class="si" style="left:1510.500px;top:819.500px;width:19px;height:17px" viewBox="0 0 19 17"><rect x=".8" y=".8" width="17.400" height="10.600" rx="2"/><path d="M.8 7h17.400M3.600 14l-1 2M7.200 14l-.5 2M11.800 14l.5 2M15.400 14l1 2" /></svg>
  <div id="x82" class="t" style="left:1538px;top:817.500px;font-size:12px;color:#333;letter-spacing:0.17px">A/C</div>
  <div class="abs" style="left:443px;top:848px;width:1412px;height:1px;background:#e4e6eb"></div>
  <div id="x83" class="t" style="left:456.500px;top:856.500px;font-size:12px;color:#333;letter-spacing:0.25px">Window</div>
  <div id="x84" class="t" style="left:805px;top:856.500px;font-size:12px;color:#333;letter-spacing:0.22px">Sep 4, 2024</div>
  <div id="x85" class="badge sb" style="left:1158px;top:858px;width:43px;height:21px;line-height:22.6px;background:#edf1fd;font-size:10.4px;color:#4a6ff0;letter-spacing:-0.13px">Open</div>
  <svg class="si" style="left:1513px;top:858.500px;width:14px;height:18px" viewBox="0 0 14 18"><path d="M4.200 12.200C2.200 11 .8 9 .8 6.800a6.200 6.200 0 0 1 12.400 0c0 2.200-1.400 4.200-3.400 5.400v2.600a2.400 2.400 0 0 1-2.400 2.400h-.8a2.400 2.400 0 0 1-2.400-2.400z"/><path d="M4.400 6.400h5.200M5.400 6.600L6.400 12M8.600 6.600L7.600 12M4.400 13.600h5.200"/></svg>
  <div id="x86" class="t" style="left:1538px;top:856.500px;font-size:12px;color:#333;letter-spacing:0.19px">Electrical</div>
  <div class="abs" style="left:443px;top:887px;width:1412px;height:1px;background:#e4e6eb"></div>
</div>
<!-- FOOTER -->
<div id="ft">
  <div id="x87" class="t" style="left:0;width:1713px;text-align:center;top:11px;font-size:11.2px;color:#333;padding-left:0">©2025 Innago LLC | | Innago's <span style="color:#4c8ccc">Terms and Conditions</span> and <span style="color:#4c8ccc">Privacy Policy</span>.</div>
</div>
<!-- chat bubble -->
<div class="abs" style="left:1852px;top:882.500px;width:50px;height:50px;border-radius:25px 25px 0 25px;background:#7761f7"></div>
<div class="abs" style="left:1862px;top:902px;width:29.200px;height:4px;background:#fff"></div>
<div class="abs" style="left:1862px;top:909.200px;width:18.200px;height:3.900px;background:#fff"></div>
</body>
</html>
